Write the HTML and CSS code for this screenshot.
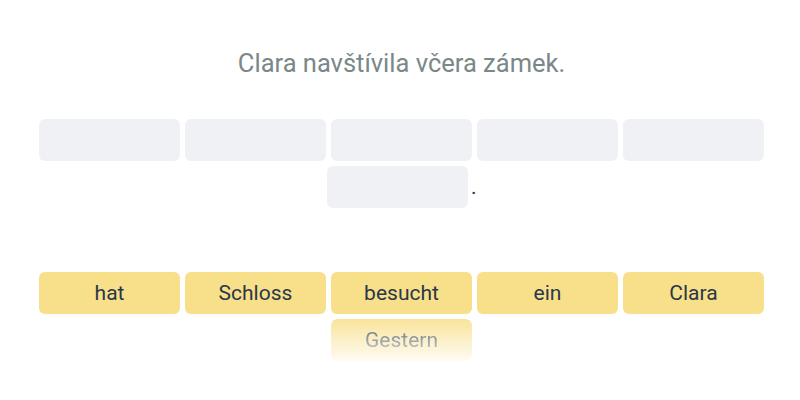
FILE: index.html
```html
<!DOCTYPE html>
<html lang="cs">
<head>
<meta charset="utf-8">
<title>Sentence builder</title>
<link rel="stylesheet" href="styles.css">
</head>
<body>
<main class="page">
  <p class="prompt">Clara navštívila včera zámek.</p>
  <div class="slots">
    <div class="slot"></div>
    <div class="slot"></div>
    <div class="slot"></div>
    <div class="slot"></div>
    <div class="slot"></div>
    <div class="slot"></div>
    <span class="punct">.</span>
  </div>
  <div class="bank">
    <button class="word">hat</button>
    <button class="word">Schloss</button>
    <button class="word">besucht</button>
    <button class="word">ein</button>
    <button class="word">Clara</button>
    <button class="word word-fading">Gestern</button>
  </div>
</main>
</body>
</html>
```

FILE: styles.css
```css
html, body {
  margin: 0;
  padding: 0;
  background: #ffffff;
}

body {
  font-family: Roboto, "Liberation Sans", Arial, sans-serif;
}

.page {
  padding: 48px 36px 0 39px;
}

.prompt {
  margin: 0;
  text-align: center;
  font-size: 25.5px;
  line-height: 30px;
  color: #7a8888;
}

.slots,
.bank {
  display: flex;
  flex-wrap: wrap;
  justify-content: center;
  align-items: center;
  gap: 5px;
}

.slots {
  margin-top: 41px;
}

.bank {
  margin-top: 64px;
}

.slot {
  width: 141px;
  height: 42px;
  border-radius: 6px;
  background: #f0f1f5;
}

.punct {
  font-size: 21px;
  line-height: 42px;
  color: #2a3748;
  width: 5px;
  margin-left: -2px;
}

.word {
  width: 141px;
  height: 42px;
  border: none;
  border-radius: 6px;
  background: #f8df8a;
  color: #2a3748;
  font-family: inherit;
  font-size: 21px;
  line-height: 42px;
  padding: 0;
  text-align: center;
}

.word-fading {
  -webkit-mask-image: linear-gradient(to bottom, rgba(0,0,0,0.85), rgba(0,0,0,0.1));
  mask-image: linear-gradient(to bottom, rgba(0,0,0,0.85), rgba(0,0,0,0.1));
}
```
